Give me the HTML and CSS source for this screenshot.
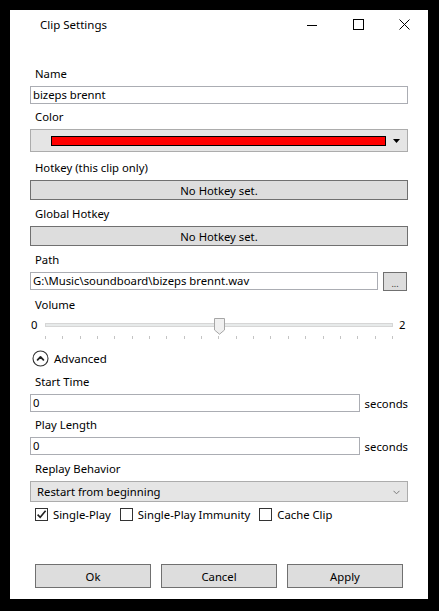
FILE: index.html
```html
<!DOCTYPE html>
<html>
<head>
<meta charset="utf-8">
<link rel="stylesheet" href="styles.css">
</head>
<body>
<div class="window">
  <div class="titlebar">
    <span class="title">Clip Settings</span>
    <div class="controls">
      <div class="ctl"><svg width="10" height="10" viewBox="0 0 10 10"><path d="M0 5.5H10" stroke="#000" stroke-width="1"/></svg></div>
      <div class="ctl"><svg width="11" height="11" viewBox="0 0 11 11"><rect x="0.5" y="0.5" width="10" height="10" fill="none" stroke="#000" stroke-width="1"/></svg></div>
      <div class="ctl"><svg width="11" height="11" viewBox="0 0 11 11"><path d="M0.5 0.5L10.5 10.5M10.5 0.5L0.5 10.5" stroke="#000" stroke-width="1"/></svg></div>
    </div>
  </div>

  <div class="content">
    <div class="label first">Name</div>
    <div class="textbox">bizeps brennt</div>

    <div class="label mt5">Color</div>
    <div class="combo color-combo">
      <span class="swatch"></span>
      <svg class="drop" width="7" height="4" viewBox="0 0 7 4"><path d="M0 0H7L3.5 4Z" fill="#000"/></svg>
    </div>

    <div class="label mt8">Hotkey (this clip only)</div>
    <div class="button wide">No Hotkey set.</div>

    <div class="label mt6">Global Hotkey</div>
    <div class="button wide">No Hotkey set.</div>

    <div class="label mt6">Path</div>
    <div class="path-row">
      <div class="textbox path">G:\Music\soundboard\bizeps brennt.wav</div>
      <div class="button browse">...</div>
    </div>

    <div class="label mt6">Volume</div>
    <div class="slider">
      <span class="min">0</span>
      <div class="track-area">
        <div class="track"></div>
        <svg class="thumb" width="11" height="17" viewBox="0 0 11 17"><path d="M0.5 0.5H10.5V12L5.5 16.2L0.5 12Z" fill="#f0f0f0" stroke="#a6a6a6" stroke-width="1"/></svg>
        <div class="ticks">
          <i></i><i></i><i></i><i></i><i></i><i></i><i></i><i></i><i></i><i></i><i></i><i></i><i></i><i></i><i></i><i></i><i></i><i></i><i></i><i></i><i></i>
        </div>
      </div>
      <span class="max">2</span>
    </div>

    <div class="advanced">
      <svg width="17" height="17" viewBox="0 0 17 17"><circle cx="8.5" cy="8.5" r="7.5" fill="none" stroke="#333" stroke-width="1.1"/><path d="M5.6 9.8L8.5 6.9L11.4 9.8" fill="none" stroke="#222" stroke-width="1.8" stroke-linecap="round" stroke-linejoin="round"/></svg>
      <span>Advanced</span>
    </div>

    <div class="label mt7">Start Time</div>
    <div class="num-row">
      <div class="textbox num">0</div>
      <span class="unit">seconds</span>
    </div>

    <div class="label mt5">Play Length</div>
    <div class="num-row">
      <div class="textbox num">0</div>
      <span class="unit">seconds</span>
    </div>

    <div class="label mt6">Replay Behavior</div>
    <div class="combo replay">
      <span>Restart from beginning</span>
      <svg width="7" height="5" viewBox="0 0 7 5"><path d="M0.5 0.8L3.5 3.8L6.5 0.8" fill="none" stroke="#7a7a7a" stroke-width="1"/></svg>
    </div>

    <div class="checks">
      <label class="check"><span class="box"><svg width="11" height="11" viewBox="0 0 11 11"><path d="M1.6 5.6L4.2 8.3L9.6 1.8" fill="none" stroke="#212121" stroke-width="1.6"/></svg></span>Single-Play</label>
      <label class="check"><span class="box"></span>Single-Play Immunity</label>
      <label class="check"><span class="box"></span>Cache Clip</label>
    </div>
  </div>

  <div class="footer">
    <div class="button action">Ok</div>
    <div class="button action">Cancel</div>
    <div class="button action">Apply</div>
  </div>
</div>
</body>
</html>
```

FILE: styles.css
```css
html, body {
  margin: 0;
  padding: 0;
  background: #000;
}

body {
  font-family: "Noto Sans", "Open Sans", sans-serif;
  font-size: 11.3px;
  color: #000;
  padding: 10px 0 0 10px;
  width: 439px;
  height: 611px;
  box-sizing: border-box;
}

.window {
  width: 418px;
  height: 589px;
  background: #fff;
  display: flex;
  flex-direction: column;
}

.titlebar {
  height: 30px;
  display: flex;
  align-items: center;
  flex-shrink: 0;
}

.title {
  padding-left: 30px;
  font-size: 11.5px;
  flex: 1;
  margin-top: -1px;
}

.controls {
  display: flex;
  height: 30px;
  margin-right: 1px;
}

.ctl {
  width: 46px;
  height: 30px;
  display: flex;
  align-items: center;
  justify-content: center;
}

.ctl svg {
  display: block;
  margin-top: -1px;
}

.content {
  padding: 26px 20px 0 20px;
  display: flex;
  flex-direction: column;
}

.label {
  height: 16px;
  line-height: 16px;
  padding: 0 0 4px 5px;
}

.mt5 { margin-top: 5px; }
.mt6 { margin-top: 6px; }
.mt7 { margin-top: 7px; }
.mt8 { margin-top: 8px; }

.textbox {
  height: 18px;
  box-sizing: border-box;
  border: 1px solid #abadb3;
  background: #fff;
  padding-left: 2px;
  line-height: 16px;
  white-space: nowrap;
  overflow: hidden;
}

.combo {
  box-sizing: border-box;
  border: 1px solid #acacac;
  background: #e5e5e5;
  display: flex;
  align-items: center;
}

.color-combo {
  height: 23px;
  padding-left: 20px;
}

.swatch {
  width: 335px;
  height: 10px;
  box-sizing: border-box;
  border: 1px solid #000;
  background: #ff0000;
}

.drop {
  margin-left: 7px;
  margin-top: 1px;
}

.button {
  box-sizing: border-box;
  border: 1px solid #707070;
  background: #dddddd;
  display: flex;
  align-items: center;
  justify-content: center;
}

.wide {
  height: 20px;
}

.path-row {
  display: flex;
  align-items: flex-start;
}

.path {
  width: 348px;
}

.browse {
  width: 24px;
  height: 19px;
  margin-left: 5px;
  font-size: 9px;
  line-height: 1;
  padding-top: 3px;
  color: #333;
}

.slider {
  height: 22px;
  display: flex;
  position: relative;
}

.min {
  width: 15px;
  padding-left: 1px;
  box-sizing: border-box;
  line-height: 16px;
}

.max {
  margin-left: 6px;
  line-height: 16px;
}

.track-area {
  width: 348px;
  height: 22px;
  position: relative;
}

.track {
  position: absolute;
  left: 0;
  right: 0;
  top: 6px;
  height: 4px;
  box-sizing: border-box;
  border: 1px solid #d6d6d6;
  background: #e7eaea;
}

.thumb {
  position: absolute;
  left: calc(50% - 5.5px);
  top: 1px;
  display: block;
}

.ticks {
  position: absolute;
  left: 0;
  right: 0;
  top: 19px;
  height: 3px;
  display: flex;
  justify-content: space-between;
}

.ticks i {
  width: 1px;
  height: 3px;
  background: #c4c4c4;
}

.advanced {
  margin-top: 10px;
  height: 18px;
  display: flex;
  align-items: center;
  padding-left: 2px;
  font-size: 11.5px;
}

.advanced svg {
  display: block;
  margin-right: 5px;
}

.num-row {
  display: flex;
  align-items: center;
}

.num {
  width: 330px;
}

.unit {
  margin-left: 5px;
}

.replay {
  height: 21px;
  padding: 1px 7px 0 6px;
  justify-content: space-between;
}

.replay span {
  line-height: 16px;
}

.checks {
  margin-top: 5px;
  height: 14px;
  display: flex;
  align-items: center;
  padding-left: 5px;
}

.check {
  display: flex;
  align-items: center;
  margin-right: 9px;
}

.box {
  width: 13px;
  height: 13px;
  box-sizing: border-box;
  border: 1px solid #333;
  background: #fff;
  margin-right: 5px;
  display: flex;
  align-items: center;
  justify-content: center;
}

.box svg {
  display: block;
}

.footer {
  margin-top: auto;
  padding: 0 0 11px 25px;
  display: flex;
  gap: 10px;
}

.action {
  width: 116px;
  height: 24px;
}
```
